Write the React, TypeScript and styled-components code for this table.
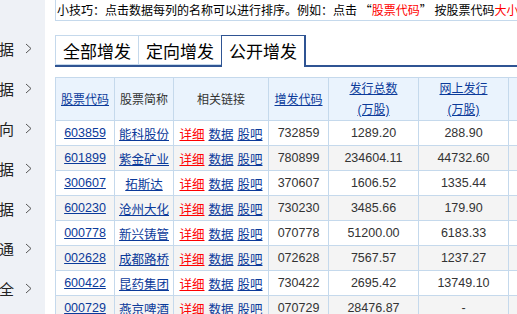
import styled, { createGlobalStyle } from "styled-components";

interface Row {
  code: string;
  name: string;
  issueCode: string;
  total: string;
  online: string;
}

const rows: Row[] = [
  { code: "603859", name: "能科股份", issueCode: "732859", total: "1289.20", online: "288.90" },
  { code: "601899", name: "紫金矿业", issueCode: "780899", total: "234604.11", online: "44732.60" },
  { code: "300607", name: "拓斯达", issueCode: "370607", total: "1606.52", online: "1335.44" },
  { code: "600230", name: "沧州大化", issueCode: "730230", total: "3485.66", online: "179.90" },
  { code: "000778", name: "新兴铸管", issueCode: "070778", total: "51200.00", online: "6183.33" },
  { code: "002628", name: "成都路桥", issueCode: "072628", total: "7567.57", online: "1237.27" },
  { code: "600422", name: "昆药集团", issueCode: "730422", total: "2695.42", online: "13749.10" },
  { code: "000729", name: "燕京啤酒", issueCode: "070729", total: "28476.87", online: "-" },
];

const menu = ["增发数据", "配股数据", "增发定向", "分红数据", "股本数据", "沪深港通", "数据大全"];

const tabs = ["全部增发", "定向增发", "公开增发"];

const GlobalStyle = createGlobalStyle`
  html, body {
    margin: 0;
    padding: 0;
    background: #fff;
    overflow: hidden;
  }
  body {
    width: 517px;
    height: 314px;
    font-family: "Liberation Sans", "Noto Sans CJK SC", sans-serif;
    font-size: 12px;
    color: #333;
  }
`;

export default function App() {
  return (
    <>
      <GlobalStyle />
      <Page>
        <Sidebar>
          {menu.map((m, i) => (
            <MenuItem key={i}>
              <span>{m}</span>
              <svg width="7" height="11" viewBox="0 0 7 11">
                <polyline points="1,1 6,5.5 1,10" fill="none" stroke="#555" strokeWidth="1" />
              </svg>
            </MenuItem>
          ))}
        </Sidebar>
        <Main>
          <Tip>
            小技巧：点击数据每列的名称可以进行排序。例如：点击 “<Red>股票代码</Red>” 按股票代码<Red>大小</Red>排序
          </Tip>
          <Tabs>
            {tabs.map((t, i) => (
              <Tab key={t} $active={i === 2}>
                {t}
              </Tab>
            ))}
          </Tabs>
          <Table>
            <colgroup>
              <col style={{ width: 59 }} />
              <col style={{ width: 59 }} />
              <col style={{ width: 95 }} />
              <col style={{ width: 60 }} />
              <col style={{ width: 90 }} />
              <col style={{ width: 90 }} />
              <col style={{ width: 90 }} />
            </colgroup>
            <thead>
              <tr>
                <Th><Link>股票代码</Link></Th>
                <Th>股票简称</Th>
                <Th>相关链接</Th>
                <Th><Link>增发代码</Link></Th>
                <Th><Link>发行总数</Link><br /><Link>(万股)</Link></Th>
                <Th><Link>网上发行</Link><br /><Link>(万股)</Link></Th>
                <Th><Link>网下配售</Link><br /><Link>(万股)</Link></Th>
              </tr>
            </thead>
            <tbody>
              {rows.map((r, i) => (
                <Tr key={r.code} $alt={i % 2 === 1}>
                  <Td><Link>{r.code}</Link></Td>
                  <Td><Link>{r.name}</Link></Td>
                  <Td>
                    <Links>
                      <Link $red>详细</Link>
                      <Link>数据</Link>
                      <Link>股吧</Link>
                    </Links>
                  </Td>
                  <Td>{r.issueCode}</Td>
                  <Td>{r.total}</Td>
                  <Td>{r.online}</Td>
                  <Td></Td>
                </Tr>
              ))}
            </tbody>
          </Table>
        </Main>
      </Page>
    </>
  );
}

const Page = styled.div`
  display: grid;
  grid-template-columns: 45px 1fr;
  column-gap: 10px;
  height: 314px;
`;

const Sidebar = styled.div`
  background: #eef1f6;
  overflow: hidden;
  padding-top: 37px;
  display: flex;
  flex-direction: column;
  gap: 17px;
`;

const MenuItem = styled.div`
  display: flex;
  justify-content: flex-end;
  align-items: center;
  gap: 11px;
  height: 23px;
  padding-right: 13px;
  white-space: nowrap;
  font-family: "Noto Sans CJK SC", sans-serif;
  font-size: 15px;
  color: #222;

  svg {
    flex-shrink: 0;
  }
`;

const Main = styled.div`
  min-width: 0;
  overflow: hidden;
`;

const Tip = styled.div`
  height: 21px;
  line-height: 20px;
  border-left: 1px solid #c5d9ec;
  border-bottom: 1px solid #c5d9ec;
  box-sizing: border-box;
  white-space: nowrap;
  padding-left: 1px;
  font-family: "Noto Sans CJK SC", sans-serif;
  font-size: 12px;
  color: #000;
  width: 700px;
`;

const Red = styled.span`
  color: #f00;
`;

const Tabs = styled.div`
  margin-top: 14px;
  display: flex;
  align-items: flex-end;
  height: 32px;
  border-bottom: 2px solid #2f5493;
  box-sizing: border-box;
  width: 700px;
`;

const Tab = styled.div<{ $active?: boolean }>`
  height: ${(p) => (p.$active ? "32px" : "30px")};
  margin-bottom: ${(p) => (p.$active ? "-2px" : "0")};
  box-sizing: border-box;
  padding: 0 7px;
  display: flex;
  align-items: center;
  font-family: "Noto Sans CJK SC", sans-serif;
  font-size: 17px;
  color: #000;
  background: #fff;
  border: 1px solid ${(p) => (p.$active ? "#2f5493" : "#c5d9ec")};
  border-bottom: ${(p) => (p.$active ? "none" : "1px solid #c5d9ec")};
  border-right: ${(p) => (p.$active ? "2px solid #2f5493" : "none")};
  padding-bottom: ${(p) => (p.$active ? "2px" : "0")};
`;

const Table = styled.table`
  margin-top: 10px;
  border-collapse: collapse;
  table-layout: fixed;
  width: 543px;
  font-size: 12px;
`;

const Th = styled.th`
  height: 40px;
  padding: 0;
  font-weight: normal;
  background: #eaf3fd;
  border: 1px solid #c5d9ec;
  text-align: center;
  line-height: 20px;
  color: #333;
  font-family: "Noto Sans CJK SC", sans-serif;
  font-size: 12px;
`;

const Tr = styled.tr<{ $alt?: boolean }>`
  background: ${(p) => (p.$alt ? "#f4f4f4" : "#fff")};
`;

const Td = styled.td`
  height: 24px;
  padding: 0;
  border: 1px solid #c5d9ec;
  text-align: center;
  white-space: nowrap;
  color: #333;
  font-family: "Liberation Sans", "Noto Sans CJK SC", sans-serif;
  font-size: 12.5px;
`;

const Links = styled.span`
  display: inline-flex;
  gap: 4px;
`;

const Link = styled.a<{ $red?: boolean }>`
  color: ${(p) => (p.$red ? "#f00" : "#0b3a9a")};
  text-decoration: underline;
  cursor: pointer;
  font-family: "Liberation Sans", "Noto Sans CJK SC", sans-serif;
`;
